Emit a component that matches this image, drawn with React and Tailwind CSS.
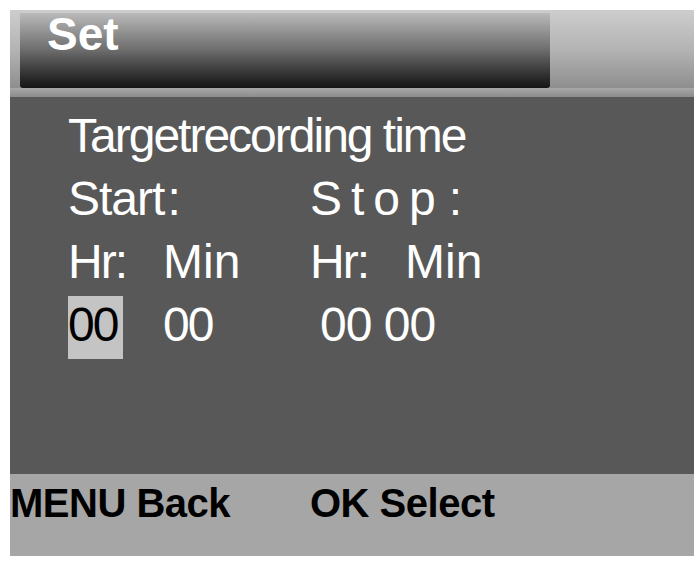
import React from "react";

const Row = ({ children, className = "" }) => (
  <div className={`flex h-[63px] leading-[63px] ${className}`}>{children}</div>
);

const App = () => {
  return (
    <div className="w-[698px] h-[562px] bg-white pt-[10px] pl-[10px] pr-[4px] font-['Liberation_Sans',Arial,sans-serif]">
      <div className="flex flex-col h-[546px]">
        {/* title bar */}
        <div className="flex h-[78px] bg-linear-to-b from-[#cdcdcd] via-[#b4b4b4] to-[#8e8e8e]">
          <div className="ml-[10px] mt-[3px] w-[530px] h-[75px] rounded-b-[3px] bg-linear-to-b from-[#bababa] via-[#6c6c6c] to-[#151515] pl-[27px]">
            <span className="block text-[46px] leading-[42px] font-bold text-white">Set</span>
          </div>
        </div>
        <div className="h-[9px] bg-linear-to-b from-[#a8a8a8] to-[#8c8c8c]" />

        {/* body */}
        <div className="flex-1 bg-[#585858] pt-[7px] pl-[58px] text-[48px] text-white">
          <Row className="tracking-[-2px]">Targetrecording time</Row>
          <Row>
            <span className="w-[242px] tracking-[-1px]">
              Start<span className="ml-[3px]">:</span>
            </span>
            <span className="tracking-[9px]">
              Stop<span className="ml-[4px]">:</span>
            </span>
          </Row>
          <Row>
            <span className="w-[95px] tracking-[-2px]">Hr:</span>
            <span className="w-[147px]">Min</span>
            <span className="w-[95px] tracking-[-2px]">Hr:</span>
            <span>Min</span>
          </Row>
          <Row>
            <span className="w-[95px]">
              <span className="block mt-[3px] w-[55px] h-[63px] bg-[#c4c4c4] text-black leading-[57px] tracking-[-2px]">
                00
              </span>
            </span>
            <span className="w-[157px] tracking-[-2px]">00</span>
            <span className="tracking-[-1px]">00 00</span>
          </Row>
        </div>

        {/* footer */}
        <div className="h-[82px] bg-[#a6a6a6] pt-[5px] flex text-[40px] leading-[48px] font-bold text-black tracking-[-0.5px]">
          <span className="w-[300px]">MENU Back</span>
          <span>OK Select</span>
        </div>
      </div>
    </div>
  );
};

export default App;
